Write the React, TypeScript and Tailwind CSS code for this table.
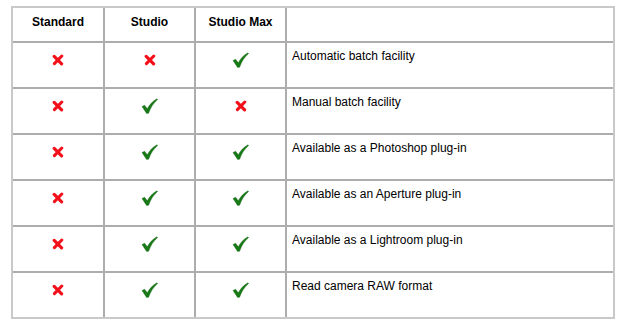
const rows: { std: boolean; studio: boolean; max: boolean; label: string }[] = [
    { std: false, studio: false, max: true, label: 'Automatic batch facility' },
    { std: false, studio: true, max: false, label: 'Manual batch facility' },
    { std: false, studio: true, max: true, label: 'Available as a Photoshop plug-in' },
    { std: false, studio: true, max: true, label: 'Available as an Aperture plug-in' },
    { std: false, studio: true, max: true, label: 'Available as a Lightroom plug-in' },
    { std: false, studio: true, max: true, label: 'Read camera RAW format' },
];

function Tick() {
    return (
        <svg width="17" height="16" viewBox="0 0 17 16" className="block">
            <path
                d="M1 8.6 L3.6 7.2 L6.3 10.8 C8.6 6.6 11.6 3.2 16 0.8 L16.6 1.6 C12.6 5 9.8 9.2 7.6 15.2 L5.6 15.4 Z"
                fill="#177a17"
                stroke="#0f5f0f"
                strokeWidth="0.4"
                strokeLinejoin="round"
            />
        </svg>
    );
}

function Cross() {
    return (
        <svg width="12" height="12" viewBox="0 0 12 12" className="block">
            <path d="M2.2 2.4 L9.6 9.8" stroke="#f2101a" strokeWidth="3.2" strokeLinecap="round" />
            <path d="M9.8 2 L2.4 9.6" stroke="#f2101a" strokeWidth="3" strokeLinecap="round" />
        </svg>
    );
}

function Mark({ ok }: { ok: boolean }) {
    return (
        <div className="bg-white flex justify-center pt-[9px]">
            {ok ? <Tick /> : <div className="pt-[2px]"><Cross /></div>}
        </div>
    );
}

export default function App() {
    return (
        <div className="w-[625px] h-[325px] bg-white pt-[6px] pl-[11px]" style={{ fontFamily: '"Liberation Sans", Arial, sans-serif' }}>
            <div className="w-[604px] border-2 border-[#c9c9c9] bg-[#adadad] grid grid-cols-[90px_89px_89px_326px] grid-rows-[33px_repeat(6,44px)] gap-[2px]">
                {/* header */}
                <div className="bg-white text-center font-bold text-[12px] text-black pt-[5px]">Standard</div>
                <div className="bg-white text-center font-bold text-[12px] text-black pt-[5px]">Studio</div>
                <div className="bg-white text-center font-bold text-[12px] text-black pt-[5px]">Studio Max</div>
                <div className="bg-white" />

                {rows.map((r) => (
                    <div key={r.label} className="contents">
                        <Mark ok={r.std} />
                        <Mark ok={r.studio} />
                        <Mark ok={r.max} />
                        <div className="bg-white text-[12px] text-black pl-[5px] pt-[4px]">{r.label}</div>
                    </div>
                ))}
            </div>
        </div>
    );
}
